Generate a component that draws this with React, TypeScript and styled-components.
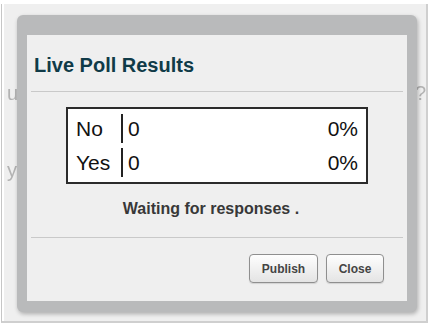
import * as React from 'react'
import styled, { createGlobalStyle } from 'styled-components'

const GlobalStyle = createGlobalStyle`
  html, body {
    margin: 0;
    padding: 0;
    background: #ffffff;
  }
  body {
    font-family: "Liberation Sans", Arial, sans-serif;
  }
`

const Shell = styled.div`
  position: relative;
  box-sizing: border-box;
  width: 427px;
  height: 319px;
  margin: 4px 0 0 1px;
  background: #efefef;
  border-left: 1px solid #c6c6c6;
  border-right: 2px solid #cfcfcf;
  border-bottom: 2px solid #cfcfcf;
  box-shadow: inset 2px 0 0 #ffffff;
  overflow: hidden;
`

const Backdrop = styled.div`
  padding-top: 77px;
  color: #b3b3b3;
  font-size: 20px;
  line-height: 24px;
  filter: blur(0.6px);
`

const BackdropLine = styled.div<{ $indent: number }>`
  display: flex;
  justify-content: space-between;
  margin-left: ${({ $indent }) => $indent}px;
  white-space: nowrap;

  & + & {
    margin-top: 53px;
  }
`

const Frame = styled.div`
  position: absolute;
  left: 15px;
  top: 11px;
  box-sizing: border-box;
  width: 400px;
  height: 297px;
  padding: 20px 10px 11px;
  background: #b9babb;
  border-radius: 6px;
  box-shadow: 1px 2px 4px rgba(0, 0, 0, 0.28);
`

const Panel = styled.div`
  height: 100%;
  background: #efefef;
  display: flex;
  flex-direction: column;
`

const Title = styled.h2`
  margin: 0;
  padding: 18px 7px 0;
  font-size: 20px;
  line-height: 24px;
  font-weight: bold;
  color: #103b48;
`

const Rule = styled.hr<{ $above: number; $below: number }>`
  margin: ${({ $above }) => $above}px 4px ${({ $below }) => $below}px;
  border: 0;
  height: 1px;
  background: #c9c9c9;
`

const Results = styled.table`
  align-self: center;
  width: 302px;
  box-sizing: border-box;
  border: 2px solid #2b2b2b;
  background: #ffffff;
  border-collapse: separate;
  border-spacing: 0 5px;
  font-size: 21px;
  color: #111111;
`

const Tr = styled.tr`
  height: 29px;
`

const Label = styled.td`
  width: 45px;
  padding: 0 0 0 8px;
  line-height: 29px;
  border-right: 2px solid #222222;
`

const Count = styled.td`
  padding: 0 0 0 5px;
  line-height: 29px;
`

const Percent = styled.td`
  padding: 0 8px 0 0;
  line-height: 29px;
  text-align: right;
`

const Status = styled.div`
  margin-top: 15px;
  font-size: 16px;
  line-height: 20px;
  font-weight: bold;
  color: #383838;
  text-align: center;
  padding-right: 12px;
`

const Actions = styled.div`
  display: flex;
  justify-content: flex-end;
  gap: 8px;
  padding: 0 23px;
`

const Button = styled.button<{ $width: number }>`
  box-sizing: border-box;
  width: ${({ $width }) => $width}px;
  height: 29px;
  padding: 0;
  border: 1px solid #8f8f8f;
  border-radius: 4px;
  background: linear-gradient(#fefefe, #e4e4e4);
  box-shadow: 0 1px 1px rgba(0, 0, 0, 0.12);
  font-family: "Liberation Sans", Arial, sans-serif;
  font-size: 12px;
  font-weight: bold;
  color: #444444;
`

const rows = [
  { answer: 'No', count: 0, percent: 0 },
  { answer: 'Yes', count: 0, percent: 0 },
]

export default function App () {
  const bodyRows = rows.map((row) =>
    <Tr key={row.answer}>
      <Label>{row.answer}</Label>
      <Count>{row.count}</Count>
      <Percent>{row.percent}%</Percent>
    </Tr>
  )

  return (
    <>
      <GlobalStyle />
      <Shell>
        <Backdrop>
          <BackdropLine $indent={5}>
            <span>u</span>
            <span>?</span>
          </BackdropLine>
          <BackdropLine $indent={5}>
            <span>y</span>
          </BackdropLine>
        </Backdrop>
        <Frame>
          <Panel>
            <Title>Live Poll Results</Title>
            <Rule $above={14} $below={15} />
            <Results>
              <tbody>
                {bodyRows}
              </tbody>
            </Results>
            <Status>Waiting for responses .</Status>
            <Rule $above={18} $below={16} />
            <Actions>
              <Button $width={69}>Publish</Button>
              <Button $width={58}>Close</Button>
            </Actions>
          </Panel>
        </Frame>
      </Shell>
    </>
  )
}
